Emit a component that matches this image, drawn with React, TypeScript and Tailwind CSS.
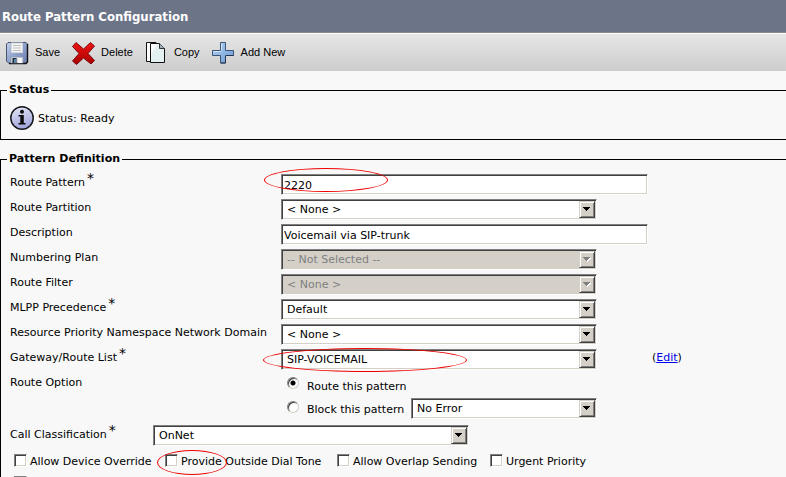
import type { ReactNode } from "react";

const bevel =
  "h-[21px] border border-t-[#808080] border-l-[#808080] border-r-white border-b-white shadow-[inset_1px_1px_0_#404040,inset_-1px_-1px_0_#d4d0c8] outline-none";

function SaveIcon() {
  return (
    <svg viewBox="0 0 24 24" className="size-6" aria-hidden="true">
      <defs>
        <linearGradient id="disk" x1="0" y1="0" x2="1" y2="1">
          <stop offset="0" stopColor="#c3d0e8" />
          <stop offset="0.5" stopColor="#8ea2cb" />
          <stop offset="1" stopColor="#6a7cab" />
        </linearGradient>
      </defs>
      <path d="M3 1.500H21L22.500 3V21L21 22.500H4L1.500 20V3Z" fill="url(#disk)" stroke="#4a5470" />
      <path d="M22.500 3V21L21 22.500H4" fill="none" stroke="#111" strokeWidth="1.400" />
      <rect x="6.500" y="2" width="11" height="9.500" fill="#f6f6f6" stroke="#d4d6dc" />
      <path d="M8 4.500H16M8 7H16M8 9.500H16" stroke="#bdbdbd" />
      <rect x="6" y="16" width="12" height="6" fill="#d9dce2" stroke="#8d95a8" strokeWidth="0.600" />
      <rect x="7.500" y="17" width="4" height="5" fill="#1c2a3c" />
      <rect x="9" y="18" width="2" height="4" fill="#5d87a8" />
      <rect x="13" y="17" width="4" height="5" fill="#f6f6f6" />
    </svg>
  );
}

function DeleteIcon() {
  return (
    <svg viewBox="0 0 24 24" className="size-6" aria-hidden="true">
      <defs>
        <linearGradient id="cross" x1="0" y1="0" x2="0" y2="1">
          <stop offset="0" stopColor="#f01414" />
          <stop offset="1" stopColor="#a80000" />
        </linearGradient>
      </defs>
      <path
        d="M5 1.500L12.500 8L19.500 1.500L23.500 5L17 12.500L23.500 19.500L20 23L12.500 17L5.500 23.500L1.500 20L8 12.500L1.500 5.500Z"
        fill="url(#cross)"
        stroke="#700008"
        strokeWidth="0.900"
      />
    </svg>
  );
}

function CopyIcon() {
  return (
    <svg viewBox="0 0 24 24" className="size-6" aria-hidden="true">
      <path d="M2.500 1.500H12L14.500 4V20.500H2.500Z" fill="#fbfbfb" stroke="#111" />
      <path d="M6.500 2.500H15.500L20.500 7.500V21.500H6.500Z" fill="#e4f1f3" stroke="#111" />
      <path d="M7 3H13L7 14Z" fill="#fff" opacity="0.800" />
      <path d="M15.500 2.500V7.500H20.500" fill="#9fb3b6" stroke="#333" />
    </svg>
  );
}

function AddIcon() {
  return (
    <svg viewBox="0 0 24 24" className="size-6" aria-hidden="true">
      <defs>
        <linearGradient id="plus" x1="0" y1="0" x2="1" y2="1">
          <stop offset="0" stopColor="#b4d4f4" />
          <stop offset="1" stopColor="#6b9ad2" />
        </linearGradient>
      </defs>
      <path
        d="M9.500 1.500H14.500V9.500H22.500V14.500H14.500V22H9.500V14.500H1.500V9.500H9.500Z"
        fill="url(#plus)"
        stroke="#3d5478"
      />
      <path d="M10.500 9.500V2.500M2.500 10.500H10" stroke="#d5e8fb" fill="none" />
      <path d="M14.500 15V22H9.500M15 14.500H22.500" stroke="#26354f" fill="none" />
    </svg>
  );
}

function InfoIcon() {
  return (
    <svg viewBox="0 0 24 24" className="size-6" aria-hidden="true">
      <defs>
        <linearGradient id="info" x1="0" y1="0" x2="0.3" y2="1">
          <stop offset="0" stopColor="#e6e8f6" />
          <stop offset="1" stopColor="#a4a8dc" />
        </linearGradient>
      </defs>
      <circle cx="12" cy="12" r="11.200" fill="url(#info)" stroke="#16181c" strokeWidth="1.500" />
      <circle cx="12" cy="5.700" r="2" fill="#0c0c0c" />
      <path d="M8.500 9H13.800V17H15.500V18.500H8.500V17H10.300V10.500H8.500Z" fill="#0c0c0c" />
    </svg>
  );
}

function Circled({ className }: { className: string }) {
  return (
    <span
      aria-hidden="true"
      className={`pointer-events-none absolute z-10 rounded-[50%] border border-[#f00000] ${className}`}
    />
  );
}

function ToolButton({ icon, children }: { icon: ReactNode; children: string }) {
  return (
    <button type="button" className="flex items-center gap-1.5">
      {icon}
      <span className="font-['Liberation_Sans',Arial,sans-serif]">{children}</span>
    </button>
  );
}

type DropdownProps = { id: string; value: string; disabled?: boolean; width?: string };

function Dropdown({ id, value, disabled = false, width = "w-[316px]" }: DropdownProps) {
  return (
    <span className={`relative block ${width}`}>
      <select
        id={id}
        disabled={disabled}
        className={`${bevel} block w-full appearance-none rounded-none bg-white pt-px pr-5 pl-[5px] text-black opacity-100 disabled:bg-[#d4d0c8] disabled:text-[#808080]`}
      >
        <option>{value}</option>
      </select>
      <span className="pointer-events-none absolute top-0.5 right-0.5 flex h-[17px] w-4 items-center justify-center border border-t-[#d4d0c8] border-r-[#404040] border-b-[#404040] border-l-[#d4d0c8] bg-[#d4d0c8] shadow-[inset_1px_1px_0_#fff,inset_-1px_-1px_0_#808080]">
        <svg viewBox="0 0 8 5" className="h-[5px] w-2" shapeRendering="crispEdges" aria-hidden="true">
          {disabled && <path d="M1 1H8V2H7V3H6V4H5V5H4V4H3V3H2V2H1Z" fill="#fff" />}
          <path d="M0 0H7V1H6V2H5V3H4V4H3V3H2V2H1V1H0Z" fill={disabled ? "#808080" : "#000"} />
        </svg>
      </span>
    </span>
  );
}

function Label({ htmlFor, required, children }: { htmlFor?: string; required?: boolean; children: string }) {
  const content = (
    <>
      {children}
      {required && <sup className="-top-[3px] pl-0.5 text-sm leading-3">*</sup>}
    </>
  );
  const style = "block h-5 leading-5 whitespace-nowrap";
  return htmlFor ? (
    <label htmlFor={htmlFor} className={style}>
      {content}
    </label>
  ) : (
    <span className={style}>{content}</span>
  );
}

type RowProps = {
  id?: string;
  label: string;
  required?: boolean;
  aside?: ReactNode;
  children: ReactNode;
};

function Row({ id, label, required, aside, children }: RowProps) {
  return (
    <div className="grid min-h-[25px] grid-cols-[271px_371px_1fr]">
      <Label htmlFor={id} required={required}>
        {label}
      </Label>
      <div className="relative pt-px">{children}</div>
      <div className="leading-5">{aside}</div>
    </div>
  );
}

function TextField({ id, value }: { id: string; value: string }) {
  return <input id={id} type="text" defaultValue={value} className={`${bevel} block w-[367px] bg-white pt-0.5 pl-0.5`} />;
}

function Radio({ id, checked }: { id: string; checked?: boolean }) {
  return (
    <input
      id={id}
      type="radio"
      name="route-option"
      defaultChecked={checked}
      className="mt-[3px] size-3 shrink-0 appearance-none rounded-full border border-t-[#808080] border-r-[#d4d0c8] border-b-[#d4d0c8] border-l-[#808080] bg-white shadow-[inset_1px_1px_0_#404040] checked:bg-[radial-gradient(circle,#000_2px,#fff_3px)]"
    />
  );
}

const box =
  "block size-[13px] shrink-0 appearance-none border border-t-[#808080] border-r-white border-b-white border-l-[#808080] bg-white shadow-[inset_1px_1px_0_#404040,inset_-1px_-1px_0_#d4d0c8]";

function Check({ id, children }: { id: string; children: ReactNode }) {
  return (
    <span className="relative flex h-[22px] gap-[3px]">
      <input id={id} type="checkbox" className={box} />
      <label htmlFor={id} className="leading-4 whitespace-nowrap">
        {children}
      </label>
    </span>
  );
}

export default function App() {
  return (
    <div className="h-screen overflow-hidden bg-[#f8f8f8] font-['DejaVu_Sans',Verdana,sans-serif] text-[11px] text-black">
      <header className="flex h-[33px] items-center border-b border-[#8a8a8a] bg-[#6c7588] pt-0.5 pl-0.5">
        <h1 className="font-['DejaVu_Sans_Condensed','DejaVu_Sans',sans-serif] text-[13px] font-bold text-white">
          Route Pattern Configuration
        </h1>
      </header>
      <nav className="flex h-[38px] items-center gap-[11px] border-t border-white bg-linear-to-b from-[#e6e6e6] to-[#cdcdcd] pl-[5px]">
        <ToolButton icon={<SaveIcon />}>Save</ToolButton>
        <ToolButton icon={<DeleteIcon />}>Delete</ToolButton>
        <ToolButton icon={<CopyIcon />}>Copy</ToolButton>
        <ToolButton icon={<AddIcon />}>Add New</ToolButton>
      </nav>

      <main className="flex flex-col gap-[11px] pt-[11px]">
        <fieldset className="border border-r-0 border-black pb-[9px] pl-[9px]">
          <legend className="-ml-[3px] px-0.5 leading-4 font-bold">Status</legend>
          <div className="flex items-center gap-1 pt-2">
            <InfoIcon />
            <span className="pt-0.5">Status: Ready</span>
          </div>
        </fieldset>

        <fieldset className="border border-r-0 border-black pl-[9px]">
          <legend className="-ml-[3px] px-0.5 leading-4 font-bold">Pattern Definition</legend>
          <div className="pt-1.5">
            <Row id="pattern" label="Route Pattern" required>
              <TextField id="pattern" value="2220" />
              <Circled className="-top-[5px] -left-[17px] h-6 w-[124px]" />
            </Row>
            <Row id="partition" label="Route Partition">
              <Dropdown id="partition" value="< None >" />
            </Row>
            <Row id="description" label="Description">
              <TextField id="description" value="Voicemail via SIP-trunk" />
            </Row>
            <Row id="plan" label="Numbering Plan">
              <Dropdown id="plan" value="-- Not Selected --" disabled />
            </Row>
            <Row id="filter" label="Route Filter">
              <Dropdown id="filter" value="< None >" disabled />
            </Row>
            <Row id="mlpp" label="MLPP Precedence" required>
              <Dropdown id="mlpp" value="Default" />
            </Row>
            <Row id="domain" label="Resource Priority Namespace Network Domain">
              <Dropdown id="domain" value="< None >" />
            </Row>
            <Row
              id="gateway"
              label="Gateway/Route List"
              required
              aside={
                <>
                  (
                  <a href="#edit" className="text-[#0000ee] underline">
                    Edit
                  </a>
                  )
                </>
              }
            >
              <Dropdown id="gateway" value="SIP-VOICEMAIL" />
              <Circled className="top-0 -left-[18px] h-6 w-[204px]" />
            </Row>
            <Row label="Route Option">
              <div className="flex h-6 gap-2 pl-1.5">
                <Radio id="route" checked />
                <label htmlFor="route" className="pt-0.5 leading-[22px]">
                  Route this pattern
                </label>
              </div>
              <div className="flex h-[27px] pl-1.5">
                <Radio id="block" />
                <label htmlFor="block" className="w-28 shrink-0 pl-2 leading-6 whitespace-nowrap">
                  Block this pattern
                </label>
                <Dropdown id="error" value="No Error" width="w-[186px] shrink-0" />
              </div>
            </Row>
            <div className="flex h-[29px]">
              <div className="w-[143px]">
                <Label htmlFor="classification" required>
                  Call Classification
                </Label>
              </div>
              <Dropdown id="classification" value="OnNet" />
            </div>
            <div className="grid grid-cols-[151px_172px_153px_1fr] pl-1">
              <Check id="override">Allow Device Override</Check>
              <Check id="dialtone">
                Provide Outside Dial Tone
                <Circled className="-top-1 -left-2 h-[25px] w-[70px]" />
              </Check>
              <Check id="overlap">Allow Overlap Sending</Check>
              <Check id="urgent">Urgent Priority</Check>
            </div>
            <div className="pl-1">
              <input type="checkbox" aria-label="Require Forced Authorization Code" className={box} />
            </div>
          </div>
        </fieldset>
      </main>
    </div>
  );
}
